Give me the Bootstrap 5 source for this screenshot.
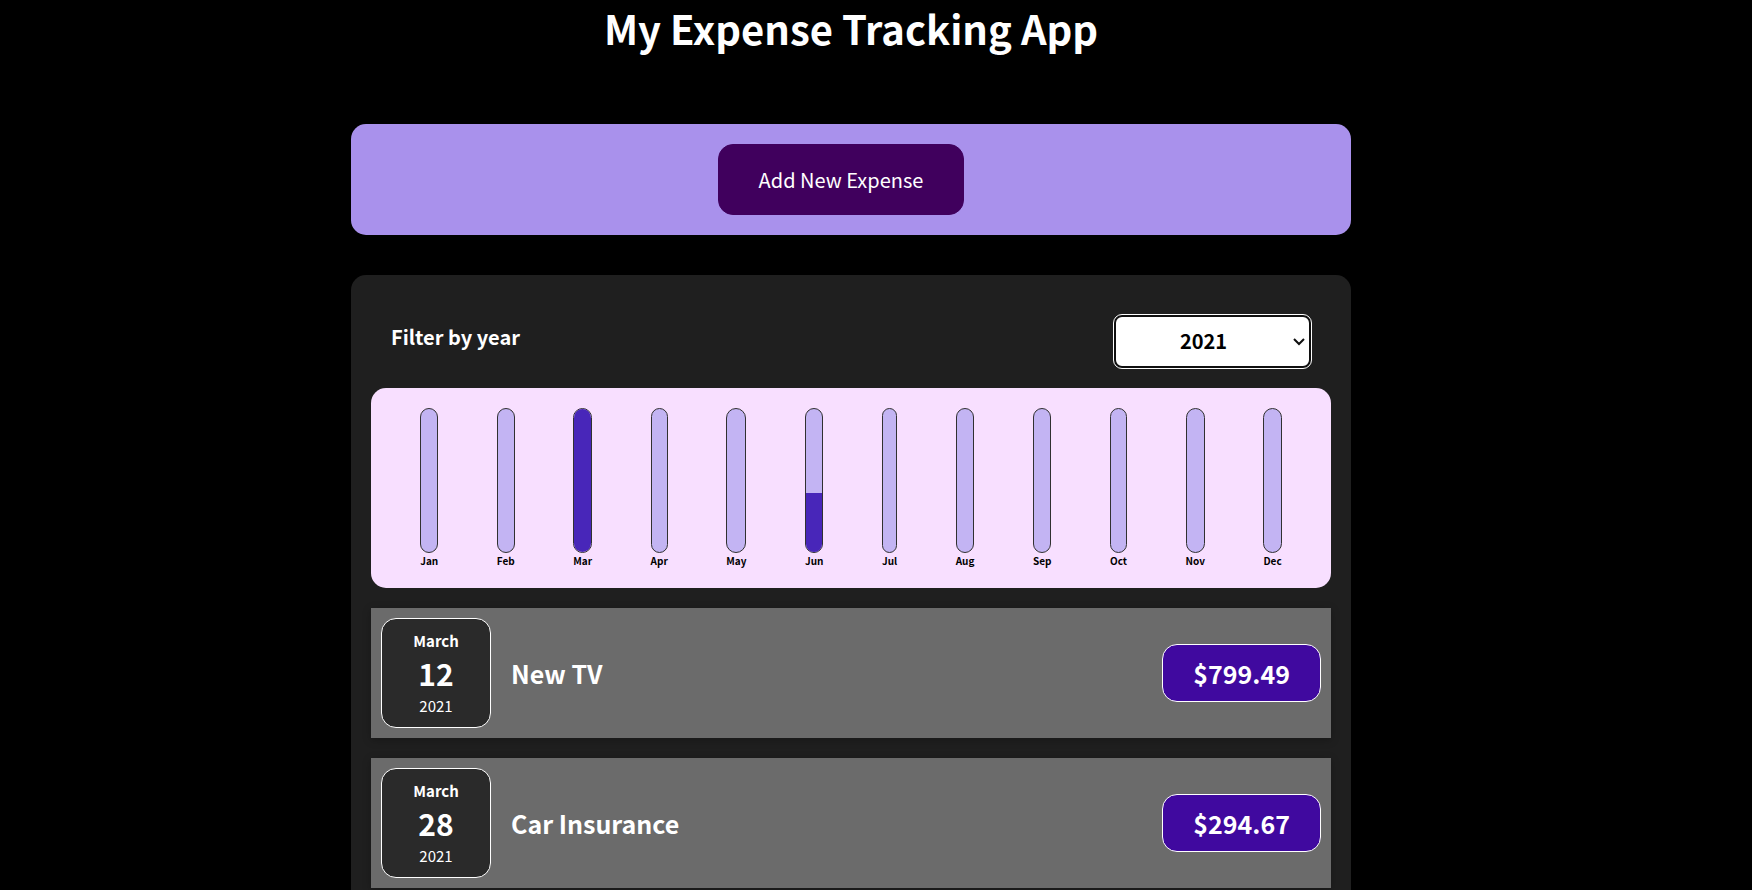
<!DOCTYPE html>
<html lang="en">
<head>
<meta charset="utf-8">
<meta name="viewport" content="width=device-width, initial-scale=1">
<title>My Expense Tracking App</title>
<link href="https://cdn.jsdelivr.net/npm/bootstrap@5.3.0/dist/css/bootstrap.min.css" rel="stylesheet">
<style>
  body { background: #000; color: #fff; font-family: "Noto Sans CJK JP", "Noto Sans", sans-serif; line-height: normal; }
  .page { padding-right: 50px; }
  .column { max-width: 1000px; }
  .app-title { font-size: 40px; font-weight: 700; line-height: 56px; margin-bottom: 68px; }
  .new-expense { background: #a991ec; border-radius: 15px; padding: 20px; margin-bottom: 40px; }
  .btn-add { --bs-btn-bg: #40005d; --bs-btn-color: #fff; --bs-btn-border-color: #40005d; --bs-btn-hover-bg: #510674; --bs-btn-hover-color: #fff; --bs-btn-hover-border-color: #510674;
    --bs-btn-padding-x: 40px; --bs-btn-padding-y: 20px; --bs-btn-border-radius: 15px; --bs-btn-font-size: 20px; --bs-btn-line-height: 29px; margin-right: 20px; }
  .expenses { background: #1f1f1f; border-radius: 15px; padding: 40px 20px 20px; min-height: 100vh; }
  .filter { padding: 0 20px; margin-bottom: 20px; }
  .filter-label { font-size: 20px; font-weight: 700; line-height: 32px; margin-top: 6px; }
  .year-select { width: 197px; height: 53px; padding: 0 26px 2px 8px; border: 2px solid #101010; border-radius: 8px; outline: 1px solid #fff;
    color: #000; font-size: 20px; font-weight: 700; text-align: center; text-align-last: center; background-color: #fff;
    background-image: url("data:image/svg+xml,%3Csvg xmlns='http://www.w3.org/2000/svg' viewBox='0 0 12 8'%3E%3Cpath fill='none' stroke='%23101010' stroke-width='2' d='M1 1l5 5 5-5'/%3E%3C/svg%3E");
    background-size: 12px 8px; background-position: right 4px center; }
  .year-select:focus { border-color: #101010; box-shadow: none; outline: 1px solid #fff; }
  .chart { background: #f8dfff; border-radius: 15px; padding: 20px; height: 200px; color: #000; }
  .month-bar { height: 145px; border: 1px solid #313131; border-radius: 12px; background: #c3b4f3; }
  .month-fill { background: #4826b9; }
  .month-name { font-size: 10px; font-weight: 700; line-height: 15px; }
  .expense { background: #6b6b6b; padding: 10px; margin-top: 20px; gap: 20px; box-shadow: 0 2px 8px rgba(0, 0, 0, .25); }
  .date-box { width: 110px; height: 110px; background: #2a2a2a; border: 1px solid #fff; border-radius: 15px; font-size: 15px; line-height: 22px; }
  .date-day { font-size: 30px; line-height: 43px; }
  .expense-name { font-size: 25px; font-weight: 700; line-height: 36px; }
  .price { background: #40099f; border: 1px solid #fff; border-radius: 15px; padding: 10px 30px; font-size: 25px; font-weight: 700; line-height: 36px; }
</style>
</head>
<body>
<div class="page vh-100 overflow-hidden">
  <main class="column mx-auto">
    <h1 class="app-title text-center">My Expense Tracking App</h1>

    <section class="new-expense d-flex justify-content-center">
      <button type="button" class="btn btn-add">Add New Expense</button>
    </section>

    <section class="expenses">
      <div class="filter d-flex justify-content-between align-items-start">
        <label class="filter-label" for="year">Filter by year</label>
        <select class="form-select year-select" id="year">
          <option selected>2021</option>
        </select>
      </div>

      <div class="chart d-flex justify-content-around">
        <div class="d-flex flex-column"><div class="month-bar"></div><div class="month-name">Jan</div></div>
        <div class="d-flex flex-column"><div class="month-bar"></div><div class="month-name">Feb</div></div>
        <div class="d-flex flex-column"><div class="month-bar d-flex flex-column justify-content-end overflow-hidden"><div class="month-fill" style="height: 100%"></div></div><div class="month-name">Mar</div></div>
        <div class="d-flex flex-column"><div class="month-bar"></div><div class="month-name">Apr</div></div>
        <div class="d-flex flex-column"><div class="month-bar"></div><div class="month-name">May</div></div>
        <div class="d-flex flex-column"><div class="month-bar d-flex flex-column justify-content-end overflow-hidden"><div class="month-fill" style="height: 41%"></div></div><div class="month-name">Jun</div></div>
        <div class="d-flex flex-column"><div class="month-bar"></div><div class="month-name">Jul</div></div>
        <div class="d-flex flex-column"><div class="month-bar"></div><div class="month-name">Aug</div></div>
        <div class="d-flex flex-column"><div class="month-bar"></div><div class="month-name">Sep</div></div>
        <div class="d-flex flex-column"><div class="month-bar"></div><div class="month-name">Oct</div></div>
        <div class="d-flex flex-column"><div class="month-bar"></div><div class="month-name">Nov</div></div>
        <div class="d-flex flex-column"><div class="month-bar"></div><div class="month-name">Dec</div></div>
      </div>

      <ul class="list-unstyled mb-0">
        <li class="expense d-flex align-items-center">
          <div class="date-box d-flex flex-column align-items-center justify-content-center flex-shrink-0">
            <div class="fw-bold">March</div><div class="date-day fw-bold">12</div><div>2021</div>
          </div>
          <h2 class="expense-name flex-grow-1 mb-0">New TV</h2>
          <div class="price">$799.49</div>
        </li>
        <li class="expense d-flex align-items-center">
          <div class="date-box d-flex flex-column align-items-center justify-content-center flex-shrink-0">
            <div class="fw-bold">March</div><div class="date-day fw-bold">28</div><div>2021</div>
          </div>
          <h2 class="expense-name flex-grow-1 mb-0">Car Insurance</h2>
          <div class="price">$294.67</div>
        </li>
      </ul>
    </section>
  </main>
</div>
<script src="https://cdn.jsdelivr.net/npm/bootstrap@5.3.0/dist/js/bootstrap.bundle.min.js"></script>
</body>
</html>
